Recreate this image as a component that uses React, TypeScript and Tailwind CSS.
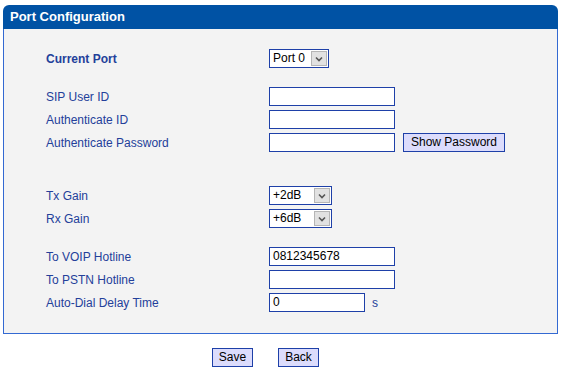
import type { ReactNode } from "react";

// Fila de formulario: etiqueta a la izquierda, control a la derecha
const Row = ({ label, bold, children }: { label: string; bold?: boolean; children?: ReactNode }) => (
  <div className="flex h-[23px] items-center">
    <div className={`w-[223px] shrink-0 text-[12px] text-[#23409a] ${bold ? "font-bold" : ""}`}>
      {label}
    </div>
    <div className="flex items-center">{children}</div>
  </div>
);

const Input = ({ value = "", w = "w-[126px]" }: { value?: string; w?: string }) => (
  <div className={`${w} h-[19px] border border-[#1e40a8] bg-white px-[3px] text-[12px] leading-[17px] text-black`}>
    {value}
  </div>
);

const Select = ({ value, w }: { value: string; w: string }) => (
  <div className={`${w} flex h-[19px] items-stretch border border-[#1e40a8] bg-white text-[12px] text-black`}>
    <div className="flex-1 pl-[3px] leading-[17px]">{value}</div>
    <div className="m-px flex w-[16px] items-center justify-center border border-[#b5b5b5] bg-[#e1e1e1]">
      <svg width="8" height="6" viewBox="0 0 8 6">
        <path d="M1 1.5 L4 4.5 L7 1.5" stroke="#555" strokeWidth="1.6" fill="none" />
      </svg>
    </div>
  </div>
);

const Button = ({ children, className = "" }: { children: ReactNode; className?: string }) => (
  <button
    className={`h-[19px] border border-[#1e40a8] bg-[#dcdcfc] text-[12px] leading-[17px] text-black ${className}`}
  >
    {children}
  </button>
);

export default function App() {
  return (
    <div className="h-[367px] w-[561px] bg-white font-['Liberation_Sans',Arial,sans-serif]">
      <div className="pl-[3px] pr-[3px] pt-[5px]">
        <div className="flex h-[24px] items-center rounded-t-[6px] bg-[#0052a4] pl-[7px] text-[13px] font-bold text-white">
          Port Configuration
        </div>
        <div className="border border-t-0 border-[#3369d2] bg-[#f3f3f3] pb-[19px] pl-[42px] pt-[18px]">
          <Row label="Current Port" bold>
            <Select value="Port 0" w="w-[60px]" />
          </Row>
          <div className="h-[15px]" />
          <Row label="SIP User ID">
            <Input />
          </Row>
          <Row label="Authenticate ID">
            <Input />
          </Row>
          <Row label="Authenticate Password">
            <Input />
            <Button className="ml-[8px] w-[102px]">Show Password</Button>
          </Row>
          <div className="h-[30px]" />
          <Row label="Tx Gain">
            <Select value="+2dB" w="w-[63px]" />
          </Row>
          <Row label="Rx Gain">
            <Select value="+6dB" w="w-[63px]" />
          </Row>
          <div className="h-[15px]" />
          <Row label="To VOIP Hotline">
            <Input value="0812345678" />
          </Row>
          <Row label="To PSTN Hotline">
            <Input />
          </Row>
          <Row label="Auto-Dial Delay Time">
            <Input value="0" w="w-[96px]" />
            <span className="ml-[7px] text-[12px] text-[#23409a]">s</span>
          </Row>
        </div>
      </div>
      <div className="flex gap-[25px] pl-[212px] pt-[14px]">
        <Button className="w-[41px]">Save</Button>
        <Button className="w-[41px]">Back</Button>
      </div>
    </div>
  );
}
